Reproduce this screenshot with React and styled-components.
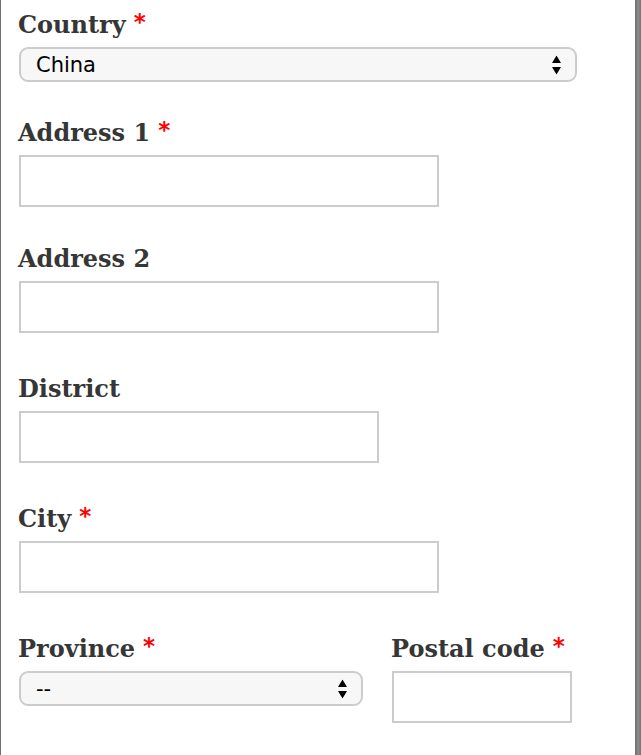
import React from "react";
import styled, { createGlobalStyle } from "styled-components";

const Global = createGlobalStyle`
  html, body { margin: 0; padding: 0; background: #fff; }
  body { width: 641px; height: 755px; overflow: hidden; }
`;

const Frame = styled.div`
  display: flex;
  width: 641px;
  height: 755px;
  box-sizing: border-box;
`;

const Page = styled.div`
  flex: 1;
  border-left: 1px solid #6e6e6e;
  background: #fff;
`;

const Edge = styled.div`
  width: 6px;
  background: linear-gradient(to right, #6a6a6a, #8c8c8c 50%, #767676);
`;

const Form = styled.form`
  display: flex;
  flex-direction: column;
  padding: 11px 0 0 17px;
`;

const Field = styled.div`
  display: flex;
  flex-direction: column;
  align-items: flex-start;
  margin-top: ${(p) => p.$gap || 0}px;
`;

const Row = styled.div`
  display: flex;
  gap: 28px;
  margin-top: ${(p) => p.$gap || 0}px;
`;

const Label = styled.label`
  display: block;
  height: 28px;
  font-family: "DejaVu Serif", "Liberation Serif", serif;
  font-weight: bold;
  font-size: 24px;
  line-height: 28px;
  color: #363636;
  margin-bottom: 8px;
  white-space: nowrap;
`;

const Req = styled.span`
  font-family: "DejaVu Sans", sans-serif;
  font-weight: bold;
  color: #ff0000;
  font-size: 23px;
  line-height: 0;
  vertical-align: 3px;
`;

const Input = styled.input`
  box-sizing: border-box;
  width: ${(p) => p.$w}px;
  height: 52px;
  margin: 0 0 0 1px;
  border: 2px solid #cccccc;
  border-radius: 0;
  background: #fff;
  outline: none;
  font-family: "DejaVu Sans", sans-serif;
  font-size: 20px;
`;

const SelectWrap = styled.div`
  position: relative;
  margin-left: 1px;
  width: ${(p) => p.$w}px;
  height: 35px;
`;

const Select = styled.select`
  appearance: none;
  -webkit-appearance: none;
  box-sizing: border-box;
  width: 100%;
  height: 100%;
  margin: 0;
  padding: 0 40px 0 15px;
  border: 2px solid #cccccc;
  border-radius: 9px;
  background: #f7f7f7;
  color: #000;
  font-family: "DejaVu Sans", "Liberation Sans", sans-serif;
  font-size: 21px;
  outline: none;
`;

const Arrows = styled.svg`
  position: absolute;
  right: 16px;
  top: 50%;
  transform: translateY(-50%);
  pointer-events: none;
`;

const Caret = () => (
  <Arrows width="9" height="19" viewBox="0 0 9 19">
    <polygon points="4.5,0 9,7.5 0,7.5" fill="#000" />
    <polygon points="0,11.5 9,11.5 4.5,19" fill="#000" />
  </Arrows>
);

const Dropdown = ({ w, value }) => (
  <SelectWrap $w={w}>
    <Select defaultValue={value}>
      <option value={value}>{value}</option>
    </Select>
    <Caret />
  </SelectWrap>
);

const Title = ({ children, required }) => (
  <Label>
    {children}
    {required && <Req> *</Req>}
  </Label>
);

export default function App() {
  return (
    <>
      <Global />
      <Frame>
        <Page>
          <Form>
            <Field>
              <Title required>Country</Title>
              <Dropdown w={558} value="China" />
            </Field>
            <Field $gap={37}>
              <Title required>Address 1</Title>
              <Input $w={420} />
            </Field>
            <Field $gap={38}>
              <Title>Address 2</Title>
              <Input $w={420} />
            </Field>
            <Field $gap={42}>
              <Title>District</Title>
              <Input $w={360} />
            </Field>
            <Field $gap={42}>
              <Title required>City</Title>
              <Input $w={420} />
            </Field>
            <Row $gap={42}>
              <Field>
                <Title required>Province</Title>
                <Dropdown w={344} value="--" />
              </Field>
              <Field>
                <Title required>Postal code</Title>
                <Input $w={180} />
              </Field>
            </Row>
          </Form>
        </Page>
        <Edge />
      </Frame>
    </>
  );
}
